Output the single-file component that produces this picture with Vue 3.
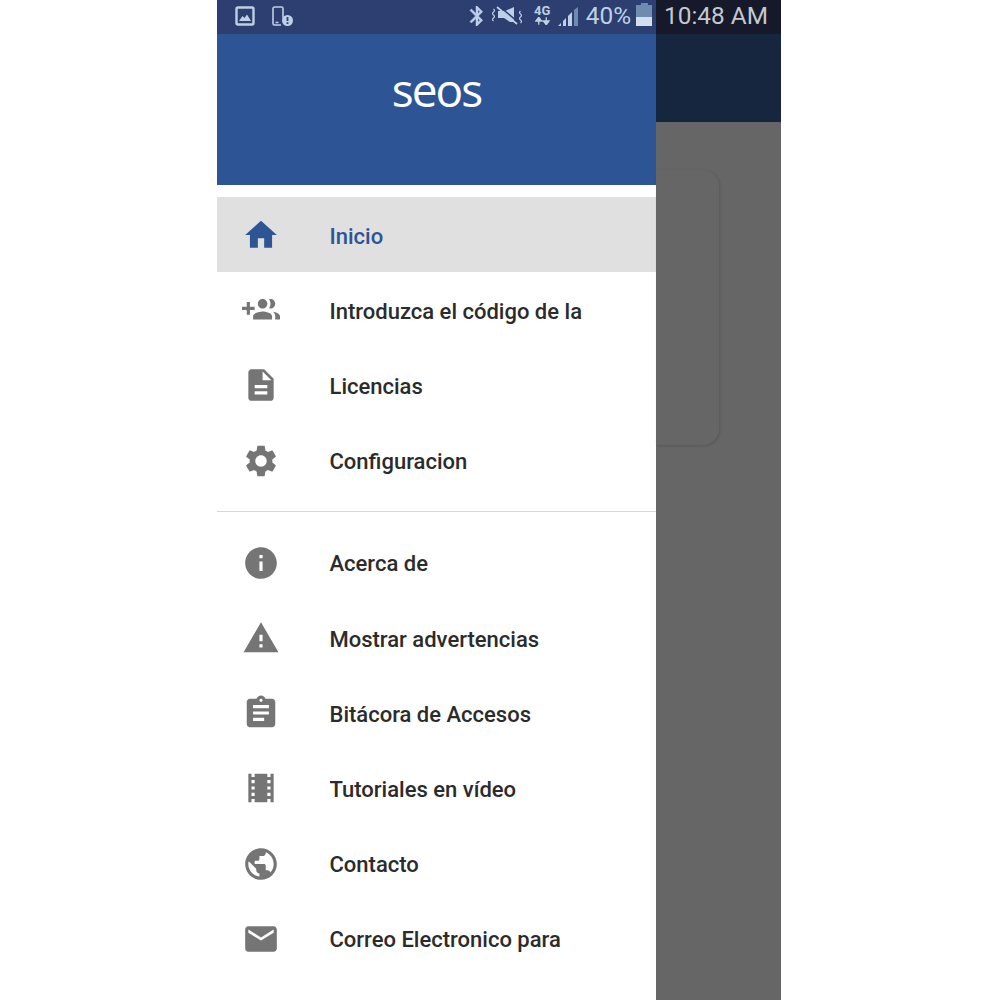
<template>
  <div class="phone">
    <div class="drawer">
      <div class="status status-left">
        <svg class="st-img" viewBox="0 0 20 20">
          <rect x="1.500" y="1.500" width="17" height="17" rx="1.500" fill="none" stroke="#bfd0e6" stroke-width="2.400" />
          <path d="M4 15l3.500-5 2 2 2.500-3.500 4 6.500z" fill="#bfd0e6" />
        </svg>
        <svg class="st-device" viewBox="0 0 21 20">
          <path d="M11 12V2.500C11 1.700 10.400 1 9.500 1h-7C1.600 1 1 1.700 1 2.500v15c0 .8.6 1.500 1.500 1.500H9" fill="none" stroke="#bfd0e6" stroke-width="1.600" />
          <path d="M3.500 16.500h3" stroke="#bfd0e6" stroke-width="1.500" />
          <circle cx="15.500" cy="14.500" r="5.500" fill="#bfd0e6" />
          <path d="M15.500 11v4M15.500 16.300v1.700" stroke="#2c3f70" stroke-width="1.800" />
        </svg>
        <div class="status-right-group">
          <svg class="st-bt" viewBox="5 2 13 20">
            <path fill="#bfd0e6" stroke="#bfd0e6" stroke-width=".5" d="M17.710 7.710L12 2h-1v7.590L6.410 5 5 6.410 10.590 12 5 17.590 6.410 19 11 14.410V22h1l5.710-5.710-4.300-4.290 4.300-4.290zM13 5.830l1.880 1.880L13 9.590V5.830zm1.880 10.460L13 18.170v-3.760l1.880 1.880z" />
          </svg>
          <svg class="st-vib" viewBox="0 0 30 20">
            <path d="M1.500 3q2 1.500 0 3t0 3q2 1.500 0 3t0 3M28.500 5q-2 1.500 0 3t0 3q-2 1.500 0 3t0 3" fill="none" stroke="#bfd0e6" stroke-width="1.200" />
            <path d="M6 5h7l9-4v15h-4l-6-4H6z" fill="#bfd0e6" />
            <path d="M5 1l20 17" stroke="#bfd0e6" stroke-width="1.800" />
            <path d="M6.500 -.5l20 17" stroke="#2c3f70" stroke-width="1.500" />
          </svg>
          <div class="st-net">
            <span>4G</span>
            <svg viewBox="0 0 16 8" class="st-arrows">
              <path d="M4 8V3.500M1 4l3-4 3 4zM12 0v4.500M9 4l3 4 3-4z" fill="#bfd0e6" stroke="#bfd0e6" stroke-width="1.400" />
            </svg>
          </div>
          <svg class="st-signal" viewBox="0 0 21 19">
            <path d="M0 19l3-3v3zM5 19v-5l3-3v8zM10 19V9l4-4v14z" fill="#bfd0e6" />
            <path d="M16 19V3l4-3v19z" fill="#6f8bb0" />
          </svg>
          <span class="st-pct">40%</span>
          <div class="st-battery">
            <i class="bat-cap"></i>
            <i class="bat-empty"></i>
            <i class="bat-full"></i>
          </div>
        </div>
      </div>
      <div class="brand">
        <span class="logo">seos</span>
      </div>
      <nav class="menu">
        <a v-for="item in mainItems" :key="item.label" class="row" :class="{ active: item.active }">
          <svg class="icon" viewBox="0 0 24 24"><path :d="item.icon" /></svg>
          <span>{{ item.label }}</span>
        </a>
        <div class="divider"></div>
        <a v-for="item in moreItems" :key="item.label" class="row">
          <svg class="icon" viewBox="0 0 24 24"><path :d="item.icon" /></svg>
          <span>{{ item.label }}</span>
        </a>
      </nav>
    </div>
    <div class="behind">
      <div class="status status-dark">10:48 AM</div>
      <div class="appbar"></div>
      <div class="dim">
        <div class="card"></div>
      </div>
    </div>
  </div>
</template>

<script setup>
const mainItems = [
  { label: "Inicio", active: true, icon: "M10 20v-6h4v6h5v-8h3L12 3 2 12h3v8z" },
  {
    label: "Introduzca el código de la",
    icon: "M8 10H5V7H3v3H0v2h3v3h2v-3h3v-2zm10 1c1.660 0 2.990-1.340 2.990-3S19.660 5 18 5c-.32 0-.63.05-.91.14.57.81.9 1.790.9 2.860s-.34 2.040-.9 2.860c.28.09.59.14.91.14zm-5 0c1.660 0 2.990-1.340 2.990-3S14.660 5 13 5s-3 1.340-3 3 1.340 3 3 3zm6.620 2.160c.83.73 1.380 1.660 1.380 2.840v2h3v-2c0-1.540-2.370-2.490-4.380-2.840zM13 13c-2 0-6 1-6 3v2h12v-2c0-2-4-3-6-3z",
  },
  {
    label: "Licencias",
    icon: "M14 2H6c-1.100 0-1.990.9-1.990 2L4 20c0 1.100.89 2 1.990 2H18c1.100 0 2-.9 2-2V8l-6-6zm2 16H8v-2h8v2zm0-4H8v-2h8v2zm-3-5V3.500L18.500 9H13z",
  },
  {
    label: "Configuracion",
    icon: "M19.140 12.940c.04-.3.06-.61.06-.94 0-.32-.02-.64-.07-.94l2.030-1.580c.18-.14.23-.41.12-.61l-1.920-3.320c-.12-.22-.37-.29-.59-.22l-2.390.96c-.5-.38-1.030-.7-1.620-.94l-.36-2.540c-.04-.24-.24-.41-.48-.41h-3.840c-.24 0-.43.17-.47.41l-.36 2.540c-.59.24-1.130.57-1.620.94l-2.390-.96c-.22-.08-.47 0-.59.22L2.740 8.870c-.12.21-.08.47.12.61l2.030 1.580c-.05.3-.09.63-.09.94s.02.64.07.94l-2.030 1.580c-.18.14-.23.41-.12.61l1.920 3.320c.12.22.37.29.59.22l2.390-.96c.5.38 1.030.7 1.620.94l.36 2.540c.05.24.24.41.48.41h3.840c.24 0 .44-.17.47-.41l.36-2.540c.59-.24 1.130-.56 1.620-.94l2.390.96c.22.08.47 0 .59-.22l1.920-3.320c.12-.22.07-.47-.12-.61l-2.010-1.580zM12 15.600c-1.980 0-3.600-1.620-3.600-3.600s1.620-3.600 3.600-3.600 3.600 1.620 3.600 3.600-1.620 3.600-3.600 3.600z",
  },
];

const moreItems = [
  {
    label: "Acerca de",
    icon: "M12 2C6.480 2 2 6.480 2 12s4.480 10 10 10 10-4.480 10-10S17.520 2 12 2zm1 15h-2v-6h2v6zm0-8h-2V7h2v2z",
  },
  { label: "Mostrar advertencias", icon: "M1 21h22L12 2 1 21zm12-3h-2v-2h2v2zm0-4h-2v-4h2v4z" },
  {
    label: "Bitácora de Accesos",
    icon: "M19 3h-4.180C14.400 1.840 13.300 1 12 1c-1.300 0-2.400.84-2.820 2H5c-1.100 0-2 .9-2 2v14c0 1.100.9 2 2 2h14c1.100 0 2-.9 2-2V5c0-1.100-.9-2-2-2zm-7 0c.55 0 1 .45 1 1s-.45 1-1 1-1-.45-1-1 .45-1 1-1zm2 14H7v-2h7v2zm3-4H7v-2h10v2zm0-4H7V7h10v2z",
  },
  {
    label: "Tutoriales en vídeo",
    icon: "M18 3v2h-2V3H8v2H6V3H4v18h2v-2h2v2h8v-2h2v2h2V3h-2zM8 17H6v-2h2v2zm0-4H6v-2h2v2zm0-4H6V7h2v2zm10 8h-2v-2h2v2zm0-4h-2v-2h2v2zm0-4h-2V7h2v2z",
  },
  {
    label: "Contacto",
    icon: "M12 2C6.480 2 2 6.480 2 12s4.480 10 10 10 10-4.480 10-10S17.520 2 12 2zm-1 17.930c-3.950-.49-7-3.850-7-7.930 0-.62.08-1.210.21-1.790L9 15v1c0 1.100.9 2 2 2v1.930zm6.900-2.540c-.26-.81-1-1.390-1.900-1.390h-1v-3c0-.55-.45-1-1-1H8v-2h2c.55 0 1-.45 1-1V7h2c1.100 0 2-.9 2-2v-.41c2.930 1.190 5 4.060 5 7.410 0 2.080-.8 3.970-2.100 5.390z",
  },
  {
    label: "Correo Electronico para",
    icon: "M20 4H4c-1.100 0-1.990.9-1.990 2L2 18c0 1.100.9 2 2 2h16c1.100 0 2-.9 2-2V6c0-1.100-.9-2-2-2zm0 4l-8 5-8-5V6l8 5 8-5v2z",
  },
];
</script>

<style>
body {
  background: #fff;
}
</style>

<style scoped>
.phone {
  display: flex;
  width: 564px;
  height: 1000px;
  margin-left: 217px;
  overflow: hidden;
  font-family: Roboto, "Liberation Sans", sans-serif;
}

.drawer {
  width: 439px;
  flex-shrink: 0;
  background: #fff;
  display: flex;
  flex-direction: column;
}

.behind {
  flex: 1;
  display: flex;
  flex-direction: column;
  background: #666;
}

.status {
  height: 34px;
  flex-shrink: 0;
  display: flex;
  align-items: center;
}

.status-left {
  background: #2c3f70;
  padding: 0 4px 0 18px;
  color: #bfd0e6;
}

.status-dark {
  background: #15192a;
  color: #c4c8cf;
  font-size: 24.4px;
  padding: 0 0 3px 8px;
  box-sizing: border-box;
  white-space: nowrap;
}

.st-img {
  width: 20px;
  height: 20px;
  margin-top: -3px;
}

.st-device {
  width: 21px;
  height: 20px;
  margin-left: 17px;
  margin-top: -3px;
}

.status-right-group {
  margin-left: auto;
  display: flex;
  align-items: center;
}

.st-bt {
  width: 15px;
  height: 20px;
  margin-top: -3px;
}

.st-vib {
  width: 30px;
  height: 20px;
  margin-left: 8px;
  margin-top: -3px;
}

.st-net {
  width: 17px;
  margin-left: 12px;
  margin-top: -4px;
  display: flex;
  flex-direction: column;
  align-items: center;
  font-size: 13px;
  line-height: 12px;
  font-weight: 700;
}

.st-arrows {
  width: 15px;
  height: 8px;
}

.st-signal {
  width: 21px;
  height: 19px;
  margin-left: 7px;
  margin-top: -2px;
}

.st-pct {
  font-size: 24.4px;
  margin-left: 7px;
  line-height: 34px;
  margin-top: -3px;
}

.st-battery {
  width: 16px;
  margin-left: 5px;
  margin-top: -5px;
  display: flex;
  flex-direction: column;
  align-items: center;
}

.bat-cap {
  width: 7px;
  height: 2px;
  background: #6f8bb0;
}

.bat-empty {
  width: 16px;
  height: 12px;
  background: #6f8bb0;
}

.bat-full {
  width: 16px;
  height: 9px;
  background: #d5dfec;
}

.brand {
  height: 151px;
  flex-shrink: 0;
  background: #2d5596;
  display: flex;
  justify-content: center;
  padding-top: 26px;
  box-sizing: border-box;
}

.logo {
  color: #fff;
  font-family: "Open Sans", sans-serif;
  font-weight: 400;
  font-size: 46px;
  line-height: 58px;
  letter-spacing: -2px;
  height: 58px;
}

.menu {
  padding-top: 12px;
  display: flex;
  flex-direction: column;
}

.row {
  height: 75.2px;
  flex-shrink: 0;
  display: flex;
  align-items: center;
  padding-left: 24.5px;
  gap: 50px;
  font-size: 22px;
  font-weight: 500;
  color: #2b2b2b;
  white-space: nowrap;
}

.row span {
  padding-top: 3px;
}

.row .icon {
  width: 38px;
  height: 38px;
  flex-shrink: 0;
  fill: #757575;
  margin-top: 1px;
}

.row.active {
  background: #e0e0e0;
  color: #2d5596;
}

.row.active .icon {
  fill: #2d5596;
}

.divider {
  height: 1px;
  background: #d6d6d6;
  margin: 13px 0;
}

.appbar {
  height: 88px;
  flex-shrink: 0;
  background: #16263f;
}

.dim {
  flex: 1;
  padding-top: 48px;
}

.card {
  width: 63px;
  height: 275px;
  background: #666;
  border-radius: 0 16px 16px 0;
  box-shadow: 1px 1px 3px rgba(0, 0, 0, 0.15);
}
</style>
